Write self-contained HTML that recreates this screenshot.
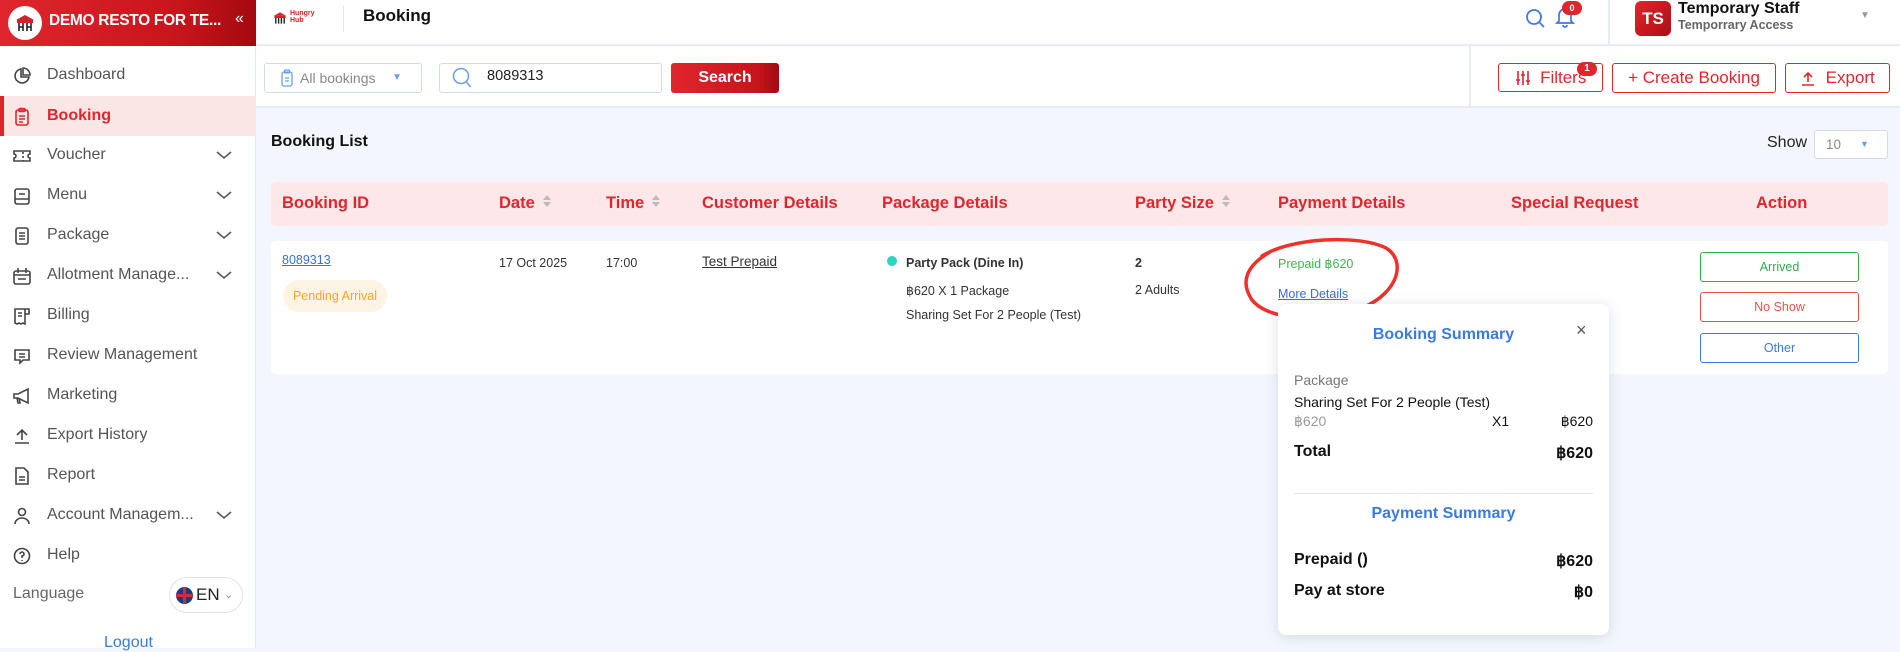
<!DOCTYPE html>
<html><head><meta charset="utf-8"><style>
*{box-sizing:border-box;margin:0;padding:0}
body{width:1900px;height:648px;overflow:hidden;font-family:"Liberation Sans",sans-serif;background:#f3f7fd;position:relative;color:#222}
.a{position:absolute}
.side{left:0;top:0;width:256px;height:648px;background:#fff;border-right:1px solid #e3ebf5}
.brand{left:0;top:0;width:256px;height:46px;background:linear-gradient(90deg,#e0262d,#c8141c 70%,#a30a10)}
.nav{left:0;width:256px;height:40px;display:flex;align-items:center;font-size:16px;color:#555}
.nav .ic{position:absolute;left:12px;top:11px;width:20px;height:20px}
.nav .t{position:absolute;left:47px}
.nav .ch{position:absolute;left:216px;top:15px}
.top{left:256px;top:0;width:1644px;height:46px;background:#fff;border-bottom:2px solid #e5ecf6}
.tool{left:256px;top:46px;width:1644px;height:62px;background:#fff;border-bottom:2px solid #e3ecf8}
.btn{border:1.5px solid #e0262d;border-radius:3px;color:#e0262d;font-size:17px;display:flex;align-items:center;justify-content:center;background:#fff}
.th{font-weight:bold;color:#e0262d;font-size:16.5px;top:194px}
.sort{display:inline-block;width:8px;margin-left:8px;vertical-align:middle}
.c{font-size:12.5px;color:#333}
.ab{left:1700px;width:159px;height:30px;border:1px solid;border-radius:3px;font-size:12.5px;display:flex;align-items:center;justify-content:center;background:#fff}
.pop{left:1278px;top:304px;width:331px;height:331px;background:#fff;border-radius:8px;box-shadow:0 2px 14px rgba(60,80,120,.18)}
.pop .a{font-size:15px}
</style></head><body>
<div class="a side"></div>
<div class="a brand"></div>
<div class="a" style="left:8px;top:6px;width:34px;height:34px;border-radius:50%;background:#fff"></div>
<svg class="a" style="left:14px;top:13px" width="22" height="20" viewBox="0 0 22 20"><path d="M2 7 L11 2 L20 7 Z" fill="#d8202a"/><rect x="3" y="7" width="16" height="3" fill="#d8202a"/><path d="M5 10v8M9 10v8M13 10v8M17 10v8M5 14h4M13 14h4" stroke="#222" stroke-width="1.6"/></svg>
<div class="a" style="left:49px;top:12px;color:#fff;font-weight:bold;font-size:15.5px;letter-spacing:-0.3px">DEMO RESTO FOR TE...</div>
<div class="a" style="left:235px;top:10px;color:#fff;font-size:16px">«</div>

<div class="a nav" style="top:55px"><svg class="ic" viewBox="0 0 20 20" fill="none" stroke="#444" stroke-width="1.6"><path d="M9 3a7 7 0 1 0 8 8h-8z"/><path d="M11 2v7h7a7 7 0 0 0-7-7z"/></svg><span class="t">Dashboard</span></div>
<div class="a" style="left:0;top:96px;width:256px;height:40px;background:#fbe6e6;border-left:4px solid #e0262d"></div>
<div class="a nav" style="top:96px;color:#e0262d;font-weight:bold"><svg class="ic" viewBox="0 0 20 20" fill="none" stroke="#e0262d" stroke-width="1.6"><rect x="4" y="3" width="12" height="15" rx="2"/><rect x="7" y="1.5" width="6" height="3" rx="1"/><path d="M7 9h6M7 12h6M7 15h4"/></svg><span class="t">Booking</span></div>
<div class="a nav" style="top:135px"><svg class="ic" viewBox="0 0 20 20" fill="none" stroke="#444" stroke-width="1.6"><path d="M2 5h16v3a2 2 0 0 0 0 4v3H2v-3a2 2 0 0 0 0-4z"/><path d="M11 6v2M11 10v2M11 14v1"/></svg><span class="t">Voucher</span><svg class="ch" width="16" height="10"><path d="M1 2l7 6 7-6" fill="none" stroke="#555" stroke-width="1.6"/></svg></div>
<div class="a nav" style="top:175px"><svg class="ic" viewBox="0 0 20 20" fill="none" stroke="#444" stroke-width="1.6"><rect x="3" y="3" width="14" height="15" rx="2"/><path d="M3 13h14M7 8h6"/></svg><span class="t">Menu</span><svg class="ch" width="16" height="10"><path d="M1 2l7 6 7-6" fill="none" stroke="#555" stroke-width="1.6"/></svg></div>
<div class="a nav" style="top:215px"><svg class="ic" viewBox="0 0 20 20" fill="none" stroke="#444" stroke-width="1.6"><rect x="4" y="2" width="12" height="16" rx="2"/><path d="M7 7h6M7 10h6M7 13h6"/></svg><span class="t">Package</span><svg class="ch" width="16" height="10"><path d="M1 2l7 6 7-6" fill="none" stroke="#555" stroke-width="1.6"/></svg></div>
<div class="a nav" style="top:255px"><svg class="ic" viewBox="0 0 20 20" fill="none" stroke="#444" stroke-width="1.6"><rect x="2" y="5" width="16" height="13" rx="2"/><path d="M2 9h16M6 2v5M14 2v5M6 13h8"/></svg><span class="t">Allotment Manage...</span><svg class="ch" width="16" height="10"><path d="M1 2l7 6 7-6" fill="none" stroke="#555" stroke-width="1.6"/></svg></div>
<div class="a nav" style="top:295px"><svg class="ic" viewBox="0 0 20 20" fill="none" stroke="#444" stroke-width="1.6"><path d="M3 3h10v15l-2-1-2 1-2-1-2 1-2-1zM13 3h4v5h-4M6 7h4M6 10h4"/></svg><span class="t">Billing</span></div>
<div class="a nav" style="top:335px"><svg class="ic" viewBox="0 0 20 20" fill="none" stroke="#444" stroke-width="1.6"><path d="M3 4h14v10H11l-3 3v-3H3z"/><path d="M7 8h6M7 11h6"/></svg><span class="t">Review Management</span></div>
<div class="a nav" style="top:375px"><svg class="ic" viewBox="0 0 20 20" fill="none" stroke="#444" stroke-width="1.6"><path d="M2 8h4l10-5v14L6 12H2zM5 12l1 5h2l-1-5"/></svg><span class="t">Marketing</span></div>
<div class="a nav" style="top:415px"><svg class="ic" viewBox="0 0 20 20" fill="none" stroke="#444" stroke-width="1.6"><path d="M10 14V4M5 9l5-5 5 5M3 17h14"/></svg><span class="t">Export History</span></div>
<div class="a nav" style="top:455px"><svg class="ic" viewBox="0 0 20 20" fill="none" stroke="#444" stroke-width="1.6"><path d="M4 2h8l4 4v12H4zM7 11h6M7 14h6"/></svg><span class="t">Report</span></div>
<div class="a nav" style="top:495px"><svg class="ic" viewBox="0 0 20 20" fill="none" stroke="#444" stroke-width="1.6"><circle cx="10" cy="6" r="3.5"/><path d="M3 18a7 6 0 0 1 14 0"/></svg><span class="t">Account Managem...</span><svg class="ch" width="16" height="10"><path d="M1 2l7 6 7-6" fill="none" stroke="#555" stroke-width="1.6"/></svg></div>
<div class="a nav" style="top:535px"><svg class="ic" viewBox="0 0 20 20" fill="none" stroke="#444" stroke-width="1.6"><circle cx="10" cy="10" r="7.5"/><path d="M8 8a2 2 0 1 1 2 2v2M10 14v1"/></svg><span class="t">Help</span></div>
<div class="a" style="left:13px;top:585px;font-size:16px;color:#666">Language</div>
<div class="a" style="left:169px;top:577px;width:74px;height:36px;border:1px solid #e2e2e2;border-radius:18px"></div>
<div class="a" style="left:176px;top:587px;width:17px;height:17px;border-radius:50%;background:#1d3a8a;overflow:hidden"><div class="a" style="left:7px;top:0;width:3px;height:17px;background:#e0262d"></div><div class="a" style="left:0;top:7px;width:17px;height:3px;background:#e0262d"></div></div>
<div class="a" style="left:196px;top:585px;font-size:17px;color:#222">EN</div>
<div class="a" style="left:224px;top:588px;font-size:11px;color:#888">⌄</div>
<div class="a" style="left:104px;top:634px;font-size:16px;color:#3a7be0">Logout</div>

<div class="a top"></div>
<svg class="a" style="left:272px;top:11px" width="16" height="14" viewBox="0 0 22 20"><path d="M2 7 L11 2 L20 7 Z" fill="#d8202a"/><rect x="3" y="7" width="16" height="3" fill="#d8202a"/><path d="M5 10v8M9 10v8M13 10v8M17 10v8" stroke="#222" stroke-width="2"/></svg>
<div class="a" style="left:290px;top:10px;font-size:7px;line-height:7px;color:#d8202a;font-weight:bold">Hungry<br>Hub</div>
<div class="a" style="left:343px;top:6px;width:1px;height:26px;background:#e5e5e5"></div>
<div class="a" style="left:363px;top:6px;font-size:17px;font-weight:bold;color:#111">Booking</div>
<svg class="a" style="left:1524px;top:7px" width="22" height="22" viewBox="0 0 22 22" fill="none" stroke="#3a7be0" stroke-width="1.8"><circle cx="10" cy="10" r="7"/><path d="M15 15l5 5"/></svg>
<svg class="a" style="left:1555px;top:6px" width="20" height="22" viewBox="0 0 20 22" fill="none" stroke="#3a7be0" stroke-width="1.7"><path d="M4 15V9a6 6 0 0 1 12 0v6l2 2H2zM8 19a2 2 0 0 0 4 0"/></svg>
<div class="a" style="left:1562px;top:1px;width:20px;height:14px;border-radius:7px;background:#e0262d;color:#fff;font-size:9px;text-align:center;line-height:14px;font-weight:bold">0</div>
<div class="a" style="left:1608px;top:0;width:2px;height:46px;background:#e5ecf6"></div>
<div class="a" style="left:1635px;top:1px;width:36px;height:35px;border-radius:6px;background:linear-gradient(135deg,#e0262d,#b00d14);color:#fff;font-weight:bold;font-size:17px;text-align:center;line-height:35px">TS</div>
<div class="a" style="left:1678px;top:0;font-weight:bold;font-size:16px;color:#111">Temporary Staff</div>
<div class="a" style="left:1678px;top:18px;font-size:12.5px;color:#666;font-weight:bold">Temporrary Access</div>
<div class="a" style="left:1860px;top:10px;font-size:10px;color:#999">▼</div>

<div class="a tool"></div>
<div class="a" style="left:1469px;top:46px;width:2px;height:62px;background:#e5ecf6"></div>
<div class="a" style="left:264px;top:63px;width:158px;height:30px;border:1px solid #cfdcef;border-radius:3px"></div>
<svg class="a" style="left:281px;top:69px" width="12" height="18" viewBox="0 0 12 18" fill="none" stroke="#6aa0e8" stroke-width="1.3"><rect x="1" y="3" width="10" height="14" rx="2"/><rect x="3.5" y="1" width="5" height="3" rx="1"/><path d="M4 9h4M4 12h4"/></svg>
<div class="a" style="left:300px;top:70px;font-size:14px;color:#888">All bookings</div>
<div class="a" style="left:392px;top:72px;font-size:10px;color:#6aa0e8">▼</div>
<div class="a" style="left:439px;top:63px;width:223px;height:30px;border:1px solid #cfdcef;border-radius:3px"></div>
<svg class="a" style="left:451px;top:66px" width="22" height="24" viewBox="0 0 22 24" fill="none" stroke="#6aa0e8" stroke-width="1.5"><circle cx="10" cy="10" r="7.5"/><path d="M15.5 16l4 5"/></svg>
<div class="a" style="left:487px;top:68px;font-size:14.5px;color:#222">8089313</div>
<div class="a" style="left:671px;top:63px;width:108px;height:30px;border-radius:3px;background:linear-gradient(90deg,#e0262d,#c8141c 80%,#a00a10);color:#fff;font-size:16px;font-weight:bold;text-align:center;line-height:30px">Search</div>
<div class="a btn" style="left:1498px;top:63px;width:105px;height:29px"><svg width="16" height="16" viewBox="0 0 16 16" stroke="#e0262d" stroke-width="1.6"><path d="M3 1v14M8 1v14M13 1v14M1 10h4M6 5h4M11 11h4"/></svg>&nbsp;&nbsp;Filters</div>
<div class="a" style="left:1577px;top:62px;width:20px;height:14px;border-radius:7px;background:#e0262d;color:#fff;font-size:10px;text-align:center;line-height:14px;font-weight:bold">1</div>
<div class="a btn" style="left:1612px;top:63px;width:164px;height:30px">+ Create Booking</div>
<div class="a btn" style="left:1785px;top:63px;width:105px;height:30px"><svg width="16" height="16" viewBox="0 0 16 16" fill="none" stroke="#e0262d" stroke-width="1.6"><path d="M8 12V3M4 7l4-4 4 4M2 15h12"/></svg>&nbsp;&nbsp;Export</div>

<div class="a" style="left:271px;top:133px;font-size:16px;font-weight:bold;color:#111">Booking List</div>
<div class="a" style="left:1767px;top:134px;font-size:16px;color:#222">Show</div>
<div class="a" style="left:1814px;top:130px;width:74px;height:29px;border:1px solid #cfdcef;border-radius:3px;background:#fff"></div>
<div class="a" style="left:1826px;top:137px;font-size:13.5px;color:#888">10</div>
<div class="a" style="left:1860px;top:139px;font-size:9px;color:#6aa0e8">▼</div>

<div class="a" style="left:271px;top:182px;width:1617px;height:44px;background:#fde7e8;border-radius:5px"></div>
<div class="a th" style="left:282px">Booking ID</div>
<div class="a th" style="left:499px">Date<span class="sort"><svg width="8" height="14"><path d="M0 6l4-5 4 5zM0 8l4 5 4-5z" fill="#bbb"/></svg></span></div>
<div class="a th" style="left:606px">Time<span class="sort"><svg width="8" height="14"><path d="M0 6l4-5 4 5zM0 8l4 5 4-5z" fill="#bbb"/></svg></span></div>
<div class="a th" style="left:702px">Customer Details</div>
<div class="a th" style="left:882px">Package Details</div>
<div class="a th" style="left:1135px">Party Size<span class="sort"><svg width="8" height="14"><path d="M0 6l4-5 4 5zM0 8l4 5 4-5z" fill="#bbb"/></svg></span></div>
<div class="a th" style="left:1278px">Payment Details</div>
<div class="a th" style="left:1511px">Special Request</div>
<div class="a th" style="left:1756px">Action</div>

<div class="a" style="left:271px;top:241px;width:1617px;height:133px;background:#fff;border-radius:5px"></div>
<div class="a c" style="left:282px;top:253px;color:#3a6fd8;text-decoration:underline">8089313</div>
<div class="a" style="left:283px;top:280px;width:104px;height:32px;border-radius:16px;background:#fff3e4;color:#f5a623;font-size:12.5px;text-align:center;line-height:32px">Pending Arrival</div>
<div class="a c" style="left:499px;top:256px">17 Oct 2025</div>
<div class="a c" style="left:606px;top:256px">17:00</div>
<div class="a c" style="left:702px;top:254px;font-size:13.5px;text-decoration:underline">Test Prepaid</div>
<div class="a" style="left:887px;top:256px;width:10px;height:10px;border-radius:50%;background:#2ed3c0"></div>
<div class="a c" style="left:906px;top:256px;font-weight:bold">Party Pack (Dine In)</div>
<div class="a c" style="left:906px;top:283px">฿620 X 1 Package</div>
<div class="a c" style="left:906px;top:308px">Sharing Set For 2 People (Test)</div>
<div class="a c" style="left:1135px;top:256px;font-weight:bold">2</div>
<div class="a c" style="left:1135px;top:283px">2 Adults</div>
<div class="a c" style="left:1278px;top:256px;color:#3cb54a">Prepaid ฿620</div>
<div class="a c" style="left:1278px;top:287px;color:#3a6fd8;text-decoration:underline">More Details</div>
<svg class="a" style="left:1240px;top:232px" width="170" height="92" viewBox="0 0 170 92"><path d="M22 24C50 6 118 2 146 16c20 12 14 44-24 60-38 14-92 14-110-8C0 50 6 34 30 20" fill="none" stroke="#f0302a" stroke-width="3.5" stroke-linecap="round"/></svg>
<div class="a ab" style="top:252px;border-color:#2fae4e;color:#2fae4e">Arrived</div>
<div class="a ab" style="top:292px;border-color:#e85050;color:#e85050">No Show</div>
<div class="a ab" style="top:333px;border-color:#3a7be0;color:#3a7be0">Other</div>

<div class="a pop">
<div class="a" style="left:0;width:331px;top:22px;text-align:center;font-weight:bold;color:#3a7be0;font-size:16px">Booking Summary</div>
<div class="a" style="left:298px;top:16px;font-size:18px;color:#555">×</div>
<div class="a" style="left:16px;top:68px;color:#777;font-size:14px!important">Package</div>
<div class="a" style="left:16px;top:90px;font-size:14px!important;color:#111">Sharing Set For 2 People (Test)</div>
<div class="a" style="left:16px;top:109px;font-size:14px!important;color:#999">฿620</div>
<div class="a" style="left:214px;top:109px;font-size:14px!important;color:#111">X1</div>
<div class="a" style="right:16px;top:109px;font-size:14px!important;color:#111">฿620</div>
<div class="a" style="left:16px;top:139px;width:299px;display:flex;justify-content:space-between;font-size:16px!important;font-weight:bold;color:#111"><span>Total</span><span>฿620</span></div>
<div class="a" style="left:16px;top:189px;width:299px;height:1px;background:#e6e6e6"></div>
<div class="a" style="left:0;width:331px;top:201px;text-align:center;font-weight:bold;color:#3a7be0;font-size:16px!important">Payment Summary</div>
<div class="a" style="left:16px;top:247px;width:299px;display:flex;justify-content:space-between;font-size:16px!important;color:#111;font-weight:bold"><span>Prepaid ()</span><span>฿620</span></div>
<div class="a" style="left:16px;top:278px;width:299px;display:flex;justify-content:space-between;font-size:16px!important;color:#111;font-weight:bold"><span>Pay at store</span><span>฿0</span></div>
</div>
</body></html>
